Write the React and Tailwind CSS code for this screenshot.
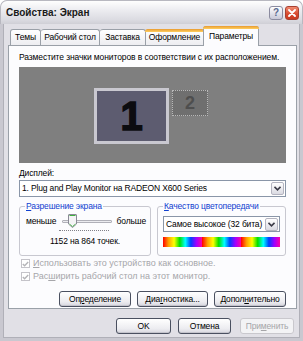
import React from "react";

const F = { fontFamily: '"Liberation Sans", Arial, sans-serif' };

function Btn({ children, disabled, className = "" }) {
  return (
    <div
      className={
        "flex items-center justify-center h-[16px] rounded-[3px] border text-[8.5px] tracking-[-0.15px] leading-none " +
        (disabled
          ? "border-[#c9c8cd] bg-[#f3f3f5] text-[#a5a5a8] "
          : "border-[#4a5060] bg-[linear-gradient(#ffffff,#ececf0_70%,#d6d6de)] text-black shadow-[inset_0_-1px_0_#c4c4cc] ") +
        className
      }
    >
      {children}
    </div>
  );
}

function Arrow() {
  return (
    <div className="w-[13px] h-[13px] rounded-[2px] border border-[#b4b4c0] bg-[linear-gradient(#ffffff,#dadae2)] flex items-center justify-center">
      <svg width="7" height="5" viewBox="0 0 7 5">
        <path d="M0.5 0.8 L3.5 3.8 L6.5 0.8" stroke="#3c3c48" strokeWidth="1.6" fill="none" />
      </svg>
    </div>
  );
}

function Check({ children }) {
  return (
    <div className="flex items-center gap-[3px] h-[13px]">
      <div className="w-[9px] h-[9px] border border-[#c4c3c9] bg-white flex items-center justify-center">
        <svg width="7" height="6" viewBox="0 0 7 6">
          <path d="M0.8 3 L2.6 4.8 L6.2 1" stroke="#b4b4b8" strokeWidth="1.4" fill="none" />
        </svg>
      </div>
      <span className="text-[9px] tracking-[0px] text-[#a6a6aa] leading-none">{children}</span>
    </div>
  );
}

function Tab({ children, sel, hover, className = "" }) {
  return (
    <div
      className={
        "relative flex items-center justify-center border border-[#9aa0a8] rounded-t-[3px] text-[8.5px] tracking-[-0.15px] leading-none " +
        (sel
          ? "h-[20px] bg-[#fcfcfe] border-b-0 -mb-px z-10 "
          : "h-[16px] bg-[linear-gradient(#ffffff,#ededf1)] border-b-0 ") +
        className
      }
    >
      {(sel || hover) && (
        <div className="absolute -top-px -left-px -right-px h-[3px] rounded-t-[3px] bg-[linear-gradient(#e89a30,#ffd060)]" />
      )}
      <span className="text-black">{children}</span>
    </div>
  );
}

const rainbow =
  "flex-1 bg-[linear-gradient(90deg,#ff0000,#ffa000,#ffff00,#00e000,#00ffff,#0040ff,#a000ff,#ff00a0)]";

export default function App() {
  return (
    <div
      style={F}
      className="w-[303px] h-[341px] flex flex-col bg-[#c9c8d0] rounded-t-[7px] overflow-hidden select-none"
    >
      {/* title bar */}
      <div className="h-[24px] shrink-0 flex items-center pl-[5px] pr-[3px] bg-[linear-gradient(#fefefe,#eeeef2_35%,#dcdce2_80%,#cfcfd6)] rounded-t-[7px] border-t border-x border-[#b8b8c0]">
        <span className="text-[10px] font-bold text-[#1a1a1a]">Свойства: Экран</span>
        <div className="ml-auto flex gap-[2px] items-center">
          <div className="w-[14px] h-[14px] rounded-[3px] border border-[#8c8ca0] bg-[linear-gradient(#ffffff,#c8c8d8)] flex items-center justify-center">
            <span className="text-[10px] font-bold text-[#5a6a90] leading-none">?</span>
          </div>
          <div className="w-[14px] h-[14px] rounded-[3px] border border-[#a84030] bg-[linear-gradient(#f08a70,#d8482c_60%,#c83a20)] flex items-center justify-center">
            <svg width="8" height="8" viewBox="0 0 8 8">
              <path d="M1 1 L7 7 M7 1 L1 7" stroke="#fff" strokeWidth="1.8" strokeLinecap="round" />
            </svg>
          </div>
        </div>
      </div>

      {/* body */}
      <div className="flex-1 mx-[3px] mb-[3px] bg-[#e1e0e6] flex flex-col pl-[4px] pr-[4px] border-x border-b border-[#b0b0b8]">
        {/* tabs */}
        <div className="flex items-end pl-[2px] h-[21px] mt-[0px]">
          <Tab className="w-[31px]">Темы</Tab>
          <Tab className="w-[59px] border-l-0">Рабочий стол</Tab>
          <Tab className="w-[46px] border-l-0">Заставка</Tab>
          <Tab className="w-[58px] border-l-0" hover>Оформление</Tab>
          <Tab className="w-[56px] -ml-[1px]" sel>Параметры</Tab>
        </div>

        {/* panel */}
        <div className="h-[264px] w-[289px] border border-[#9aa0a8] bg-[#fcfcfe] flex flex-col px-[10px]">
          <div className="text-[8.5px] tracking-[-0.1px] leading-none mt-[7px] text-black whitespace-nowrap">
            Разместите значки мониторов в соответствии с их расположением.
          </div>
          <div className="relative mt-[5px] h-[96px] bg-[#7f7f7f]">
            <div className="absolute left-[75px] top-[21px] w-[75px] h-[56px] border-[3px] border-[#c9c8d0] bg-[#5d5c70] flex items-center justify-center">
              <span className="text-[40px] font-black text-[#0c0c10] leading-none [-webkit-text-stroke:1.5px_#0c0c10]">1</span>
            </div>
            <div className="absolute left-[153px] top-[23px] w-[36px] h-[26px] border border-dotted border-[#b8b8b8] bg-[#6f6f6f] flex items-center justify-center">
              <span className="text-[18px] font-bold text-[#4e4e4e] leading-none">2</span>
            </div>
          </div>

          <div className="text-[8.5px] tracking-[-0.15px] leading-none mt-[6px] text-black">
            <span className="underline">Д</span>исплей:
          </div>
          <div className="mt-[3px] h-[17px] border border-[#8a96a8] bg-white flex items-center pl-[2px] pr-[1px]">
            <span className="text-[8.5px] tracking-[-0.15px] leading-none text-black">1. Plug and Play Monitor на RADEON X600 Series</span>
            <div className="ml-auto"><Arrow /></div>
          </div>

          {/* group boxes */}
          <div className="mt-[9px] flex gap-[6px] h-[50px]">
            <div className="relative w-[132px] h-full border border-[#c8c8d0] rounded-[3px] flex flex-col items-center">
              <div className="absolute -top-[5px] left-[5px] bg-[#fcfcfe] px-[1px] text-[8.5px] tracking-[-0.15px] leading-none text-[#1040d0] whitespace-nowrap">
                <span className="underline">Р</span>азрешение экрана
              </div>
              <div className="mt-[8px] w-full flex items-center pl-[6px] pr-[4px] h-[12px]">
                <span className="text-[8.5px] tracking-[-0.15px] leading-none text-black">меньше</span>
                <div className="relative ml-[6px] w-[50px] h-[12px]">
                  <div className="absolute top-[5px] left-0 right-0 h-[3px] border border-[#b0b0b8] bg-[#ececf0] rounded-[1px]" />
                  <svg className="absolute left-[6px] top-[-1px]" width="9" height="14" viewBox="0 0 9 14">
                    <path d="M0.5 1 Q0.5 0.5 1 0.5 L8 0.5 Q8.5 0.5 8.5 1 L8.5 10 L4.5 13.5 L0.5 10 Z" fill="#f4f4f6" stroke="#8a8a96" />
                    <path d="M1.5 1.5 L7.5 1.5" stroke="#40b040" strokeWidth="1.2" />
                    <path d="M1.5 10 L4.5 12.5 L7.5 10" stroke="#60c060" strokeWidth="1" fill="none" />
                  </svg>
                </div>
                <span className="ml-auto text-[8.5px] tracking-[-0.15px] leading-none text-black">больше</span>
              </div>
              <div className="mt-[3px] w-[50px] -ml-[2px] border-t border-dotted border-[#808088]" />
              <div className="mt-[6px] text-[8.5px] tracking-[-0.15px] leading-none text-black">1152 на 864 точек.</div>
            </div>
            <div className="relative flex-1 h-full border border-[#c8c8d0] rounded-[3px] flex flex-col px-[5px]">
              <div className="absolute -top-[5px] left-[5px] bg-[#fcfcfe] px-[1px] text-[8.5px] tracking-[-0.15px] leading-none text-[#1040d0] whitespace-nowrap">
                <span className="underline">К</span>ачество цветопередачи
              </div>
              <div className="mt-[9px] h-[16px] border border-[#8a96a8] bg-white flex items-center pl-[2px] pr-[1px]">
                <span className="text-[8.5px] tracking-[-0.15px] leading-none text-black whitespace-nowrap">Самое высокое (32 бита)</span>
                <div className="ml-auto"><Arrow /></div>
              </div>
              <div className="mt-[5px] h-[10px] flex">
                <div className={rainbow} />
                <div className={rainbow} />
                <div className={rainbow} />
              </div>
            </div>
          </div>

          <div className="mt-[1px] pl-[2px] flex flex-col">
            <Check><span className="underline">И</span>спользовать это устройство как основное.</Check>
            <Check>Рас<span className="underline">ш</span>ирить рабочий стол на этот монитор.</Check>
          </div>

          <div className="mt-[8px] flex justify-end gap-[6px]">
            <Btn className="w-[72px]">Оп<span className="underline">р</span>еделение</Btn>
            <Btn className="w-[71px]">Диа<span className="underline">г</span>ностика...</Btn>
            <Btn className="w-[72px]">Допол<span className="underline">н</span>ительно</Btn>
          </div>
        </div>

        {/* bottom buttons */}
        <div className="mt-[9px] flex justify-end gap-[7px] pr-[1px]">
          <Btn className="w-[55px]">OK</Btn>
          <Btn className="w-[53px]">Отмена</Btn>
          <Btn className="w-[54px] ml-[2px]" disabled>При<span className="underline">м</span>енить</Btn>
        </div>
      </div>
    </div>
  );
}
